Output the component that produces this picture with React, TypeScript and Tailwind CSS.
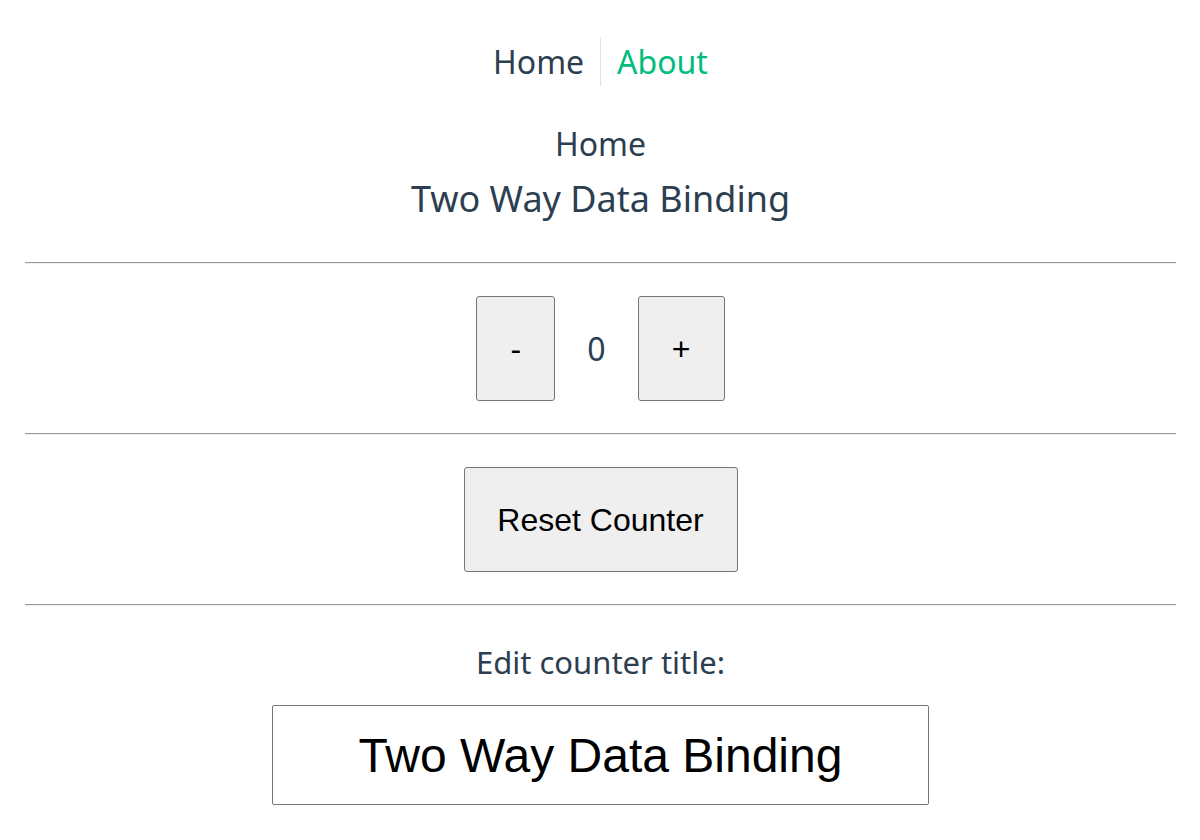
import React, { useState } from 'react';

const sans = 'font-["Noto_Sans","Open_Sans",sans-serif]';
const btn =
  'h-[105px] rounded-[3px] border border-[#767676] bg-[#efefef] text-center font-["Liberation_Sans",Arial,sans-serif] text-[32px] text-black';

function Rule() {
  return <div className="h-0 border-t border-b border-t-[#9a9a9a] border-b-[#eeeeee]" />;
}

export default function App() {
  const [count, setCount] = useState(0);
  const [title, setTitle] = useState('Two Way Data Binding');

  return (
    <div className={`min-h-[840px] bg-white pl-[25px] pr-[24px] text-center text-[#2c3e50] ${sans}`}>
      <nav className="flex justify-center pt-[37px] text-[32px] leading-[49px]">
        <a className="px-4 text-[#2c3e50]" href="#">Home</a>
        <a className="border-l border-[#e2e2e2] px-4 text-[#00bd7e]" href="#">About</a>
      </nav>

      <h2 className="mt-[34px] text-[32px] leading-[48px]">Home</h2>
      <h1 className="mt-[7px] text-[36px] leading-[48px]">{title}</h1>

      <div className="mt-[39px]">
        <Rule />
      </div>

      <div className="mt-[32px] flex items-center justify-center gap-8">
        <button className={`${btn} w-[79px]`} onClick={() => setCount(count - 1)}>-</button>
        <span className="text-[32px] leading-[40px]">{count}</span>
        <button className={`${btn} w-[87px]`} onClick={() => setCount(count + 1)}>+</button>
      </div>

      <div className="mt-[32px]">
        <Rule />
      </div>

      <div className="mt-[32px] flex justify-center">
        <button className={`${btn} w-[274px]`} onClick={() => setCount(0)}>Reset Counter</button>
      </div>

      <div className="mt-[32px]">
        <Rule />
      </div>

      <label className="mt-[36px] block text-[31px] leading-[40px]">Edit counter title:</label>
      <div className="mt-[23px] flex justify-center">
        <input
          className="h-[100px] w-[657px] rounded-[2px] border border-[#767676] bg-white text-center font-['Liberation_Sans',Arial,sans-serif] text-[48px] text-black outline-none"
          value={title}
          onChange={(e) => setTitle(e.target.value)}
        />
      </div>
    </div>
  );
}
